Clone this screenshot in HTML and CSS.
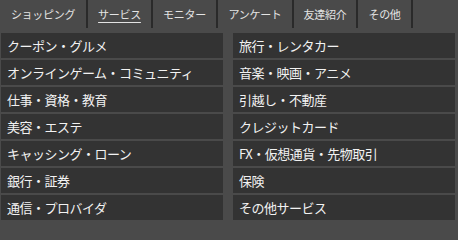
FILE: index.html
```html
<!DOCTYPE html>
<html lang="ja">
<head>
<meta charset="utf-8">
<link rel="stylesheet" href="styles.css">
</head>
<body>
<nav class="tabs">
  <span class="tab">ショッピング</span>
  <span class="tab active">サービス</span>
  <span class="tab">モニター</span>
  <span class="tab">アンケート</span>
  <span class="tab">友達紹介</span>
  <span class="tab">その他</span>
</nav>
<div class="menu">
  <a class="item">クーポン・グルメ</a>
  <a class="item">旅行・レンタカー</a>
  <a class="item">オンラインゲーム・コミュニティ</a>
  <a class="item">音楽・映画・アニメ</a>
  <a class="item">仕事・資格・教育</a>
  <a class="item">引越し・不動産</a>
  <a class="item">美容・エステ</a>
  <a class="item">クレジットカード</a>
  <a class="item">キャッシング・ローン</a>
  <a class="item">FX・仮想通貨・先物取引</a>
  <a class="item">銀行・証券</a>
  <a class="item">保険</a>
  <a class="item">通信・プロバイダ</a>
  <a class="item">その他サービス</a>
</div>
</body>
</html>
```

FILE: styles.css
```css
html, body {
  margin: 0;
  padding: 0;
  background: #4a4a4a;
  font-family: "Noto Sans CJK JP", "Noto Sans", sans-serif;
  overflow: hidden;
}

.tabs {
  display: grid;
  grid-template-columns: 88px 65px 65px 76px 64px 55px;
  height: 28px;
}

.tab {
  box-sizing: border-box;
  border-right: 2px solid #2a2a2a;
  color: #e4e4e4;
  font-size: 11px;
  line-height: 28px;
  text-align: center;
  letter-spacing: -0.3px;
}

.tab.active {
  text-decoration: underline;
  text-underline-offset: 3px;
}

.menu {
  display: grid;
  grid-template-columns: 222px 222px;
  column-gap: 10px;
  row-gap: 2px;
  padding: 5px 3px 0 1px;
}

.item {
  display: block;
  height: 25px;
  line-height: 25px;
  background: #333333;
  color: #f2f2f2;
  font-size: 13px;
  padding-left: 6px;
  letter-spacing: -0.5px;
  white-space: nowrap;
}
```
